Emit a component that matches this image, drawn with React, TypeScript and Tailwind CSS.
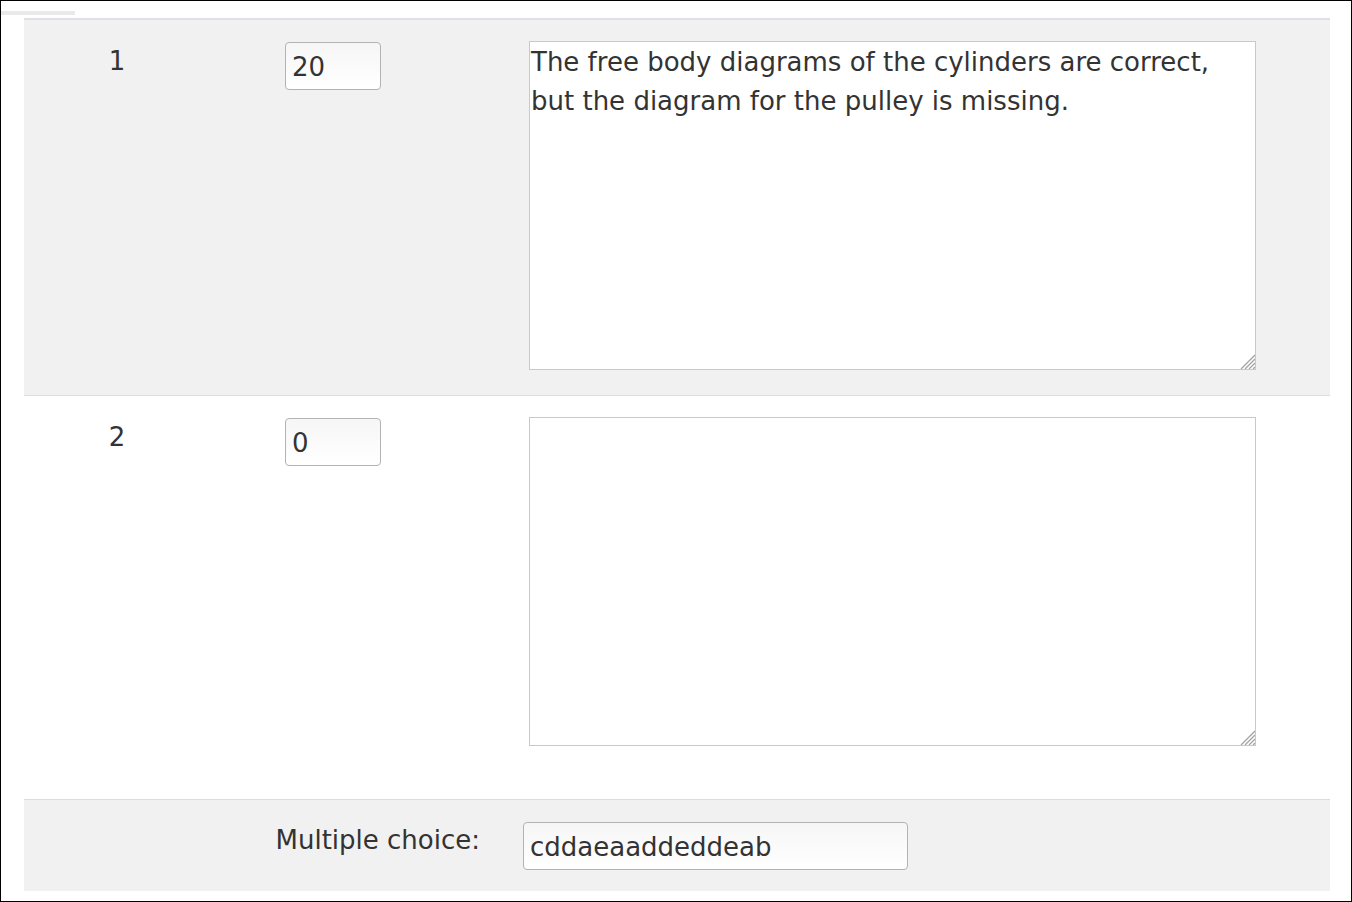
import React from 'react';

const font = { fontFamily: '"DejaVu Sans", Verdana, sans-serif' };

const inputClass =
  "h-[48px] rounded-[4px] border border-[#b3b3b3] bg-gradient-to-t from-white to-[#f6f6f6] px-[6px] pt-[2px] text-[26px] text-[#333] outline-none";

const textareaClass =
  "block h-[329px] w-[727px] resize-none border border-[#c9c9c9] bg-white px-[1px] pt-[1px] text-[26px] leading-[39px] text-[#333] outline-none";

function ResizeGrip() {
  return (
    <svg className="pointer-events-none absolute bottom-[1px] right-[1px]" width="15" height="15" viewBox="0 0 15 15">
      <g stroke="#a3a3a3" strokeWidth="1.3">
        <line x1="1" y1="15" x2="15" y2="1" />
        <line x1="5" y1="15" x2="15" y2="5" />
        <line x1="9" y1="15" x2="15" y2="9" />
        <line x1="13" y1="15" x2="15" y2="13" />
      </g>
    </svg>
  );
}

interface ScoreRowProps {
  num: string;
  score: string;
  comment: string;
  shaded?: boolean;
}

function ScoreRow({ num, score, comment, shaded }: ScoreRowProps) {
  return (
    <div
      className={
        shaded
          ? "flex h-[378px] items-start border-t-2 border-b border-t-[#dde1e5] border-b-[#dddddd] bg-[#f1f1f1] pt-[21px]"
          : "flex h-[403px] items-start pt-[21px]"
      }
    >
      <div className="w-[186px] pt-[1px] text-center text-[26px] leading-[39px] text-[#333]">{num}</div>
      <input className={`${inputClass} ml-[75px] mt-[1px] w-[96px]`} defaultValue={score} style={font} />
      <div className="relative ml-[148px]">
        <textarea className={textareaClass} defaultValue={comment} style={font} />
        <ResizeGrip />
      </div>
    </div>
  );
}

export default function App() {
  return (
    <div className="h-[902px] w-full overflow-hidden border border-black bg-white" style={font}>
      <div className="mt-[10px] h-[4px] w-[74px] bg-[#e7e9eb]" />
      <div className="ml-[23px] mt-[3px] w-[1306px]">
        <ScoreRow
          num="1"
          score="20"
          comment="The free body diagrams of the cylinders are correct, but the diagram for the pulley is missing."
          shaded
        />
        <ScoreRow num="2" score="0" comment="" />
        <div className="flex h-[92px] items-start border-t border-[#dddddd] bg-[#f1f1f1] pt-[21px]">
          <div className="w-[456px] text-right text-[26px] leading-[39px] text-[#333]">Multiple choice:</div>
          <input className={`${inputClass} ml-[43px] mt-[1px] w-[385px]`} defaultValue="cddaeaaddeddeab" style={font} />
        </div>
      </div>
    </div>
  );
}
